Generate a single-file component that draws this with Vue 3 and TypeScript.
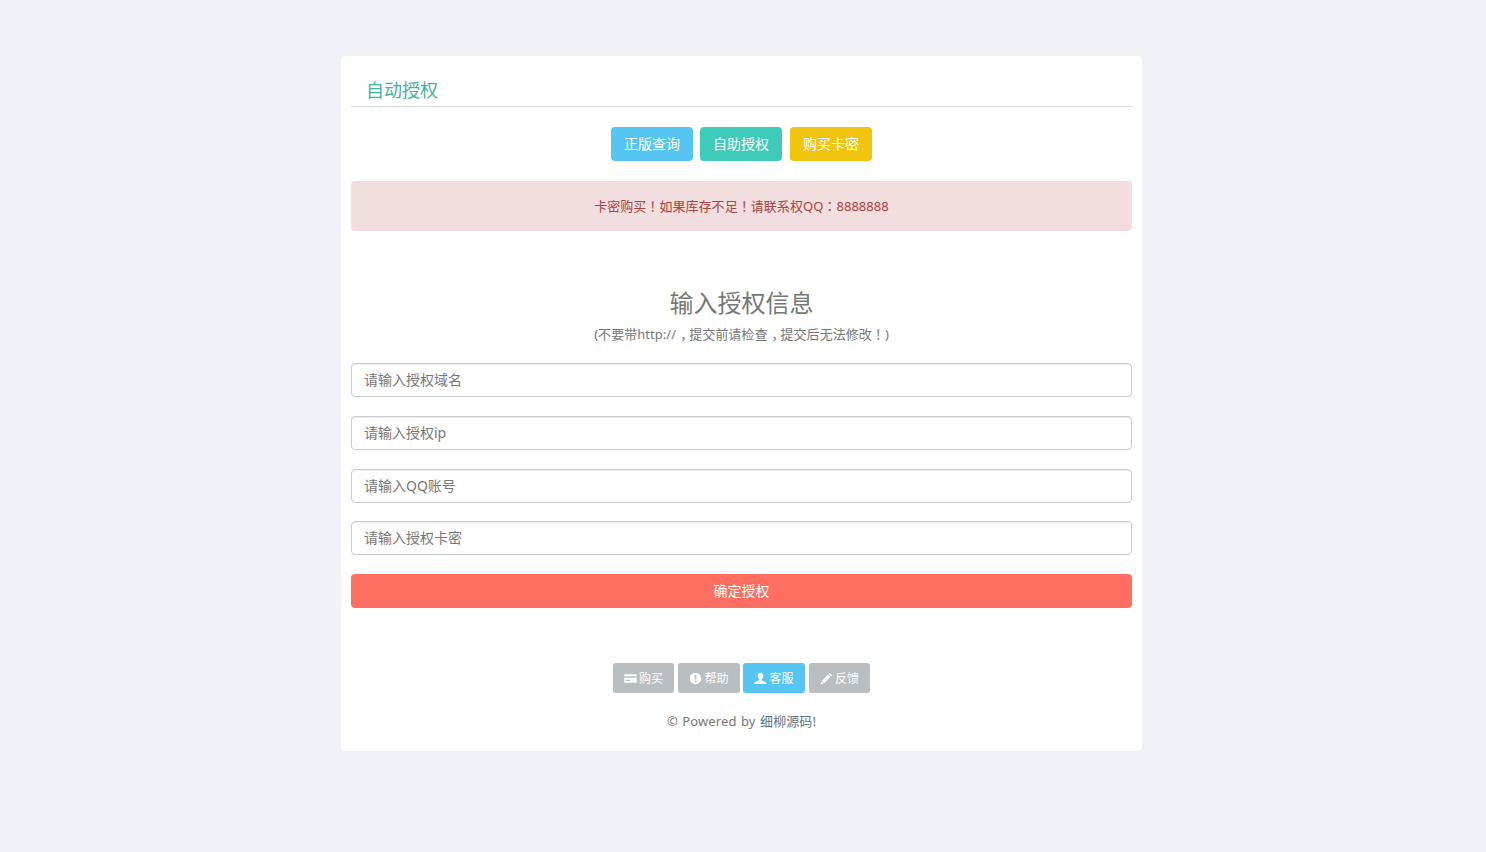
<script setup lang="ts">
const tops = [
  { label: '正版查询', cls: 'info' },
  { label: '自助授权', cls: 'teal' },
  { label: '购买卡密', cls: 'amber' },
]
const fields = ['请输入授权域名', '请输入授权ip', '请输入QQ账号', '请输入授权卡密']
const links = [
  { label: '购买', icon: 'card', active: false },
  { label: '帮助', icon: 'help', active: false },
  { label: '客服', icon: 'user', active: true },
  { label: '反馈', icon: 'pencil', active: false },
]
</script>

<template>
  <div class="page">
    <main class="card">
      <header class="head"><h3>自动授权</h3></header>
      <div class="top-actions">
        <a v-for="t in tops" :key="t.label" class="btn" :class="t.cls">{{ t.label }}</a>
      </div>
      <div class="alert">卡密购买！如果库存不足！请联系权QQ：8888888</div>
      <h2 class="title">输入授权信息</h2>
      <p class="sub">(不要带http://<span class="comma">，</span>提交前请检查<span class="comma">，</span>提交后无法修改！)</p>
      <form class="form" @submit.prevent>
        <input v-for="f in fields" :key="f" class="field" type="text" :placeholder="f" />
        <button class="submit" type="submit">确定授权</button>
      </form>
      <nav class="links">
        <a v-for="l in links" :key="l.label" class="link" :class="{ active: l.active }">
          <svg class="ico" viewBox="0 0 14 14" aria-hidden="true">
            <path v-if="l.icon === 'card'" fill="currentColor" fill-rule="evenodd" d="M1.2 2.5h11.6a1 1 0 0 1 1 1v7a1 1 0 0 1-1 1H1.2a1 1 0 0 1-1-1v-7a1 1 0 0 1 1-1ZM.2 4.6v1.6h13.6V4.6ZM1.6 8.4v1.2h5V8.4Z" />
            <path v-else-if="l.icon === 'help'" fill="currentColor" fill-rule="evenodd" d="M7 .8a6.2 6.2 0 1 1 0 12.4A6.2 6.2 0 0 1 7 .8ZM5.9 3.2l.3 5h1.6l.3-5ZM7 9.1a1.1 1.1 0 1 0 0 2.2 1.1 1.1 0 0 0 0-2.2Z" />
            <path v-else-if="l.icon === 'user'" fill="currentColor" d="M7 .7c2 0 3.1 1.5 3.1 3.4 0 1.6-.7 3-1.6 3.7v1.1c0 .5 3.200 1.100 4.500 2.100.4.300.6 1.100.6 2H.4c0-.9.2-1.700.6-2 1.300-1 4.500-1.600 4.500-2.100V7.800C4.600 7.100 3.900 5.700 3.900 4.100 3.900 2.200 5 .7 7 .7Z" />
            <path v-else fill="currentColor" d="M10.600 1 13 3.400 11.700 4.700 9.300 2.300ZM8.600 3 11 5.400 4.300 12.100 1.900 9.700ZM1.400 10.500 3.500 12.600.6 13.400Z" />
          </svg>
          <span class="link-text">{{ l.label }}</span>
        </a>
      </nav>
      <footer class="foot">© Powered by <a class="foot-link">细柳源码!</a></footer>
    </main>
  </div>
</template>

<style>
html,
body {
  margin: 0;
  background: #f0f2f7;
}
</style>

<style scoped>
.page {
  min-height: 852px;
  box-sizing: border-box;
  padding-top: 56px;
  font-family: "Noto Sans", "Noto Sans CJK SC", sans-serif;
}
.card {
  width: 801px;
  height: 695px;
  box-sizing: border-box;
  margin-left: 341px;
  padding: 0 10px;
  background: #fff;
  border-radius: 4px;
}
.head {
  height: 51px;
  box-sizing: border-box;
  border-bottom: 1px solid #dcdde0;
  padding: 21px 0 0 15px;
}
.head h3 {
  margin: 0;
  font-size: 18px;
  line-height: 26px;
  font-weight: 400;
  color: #45b29d;
}
.top-actions {
  display: flex;
  justify-content: center;
  gap: 7px;
  margin-top: 20px;
}
.btn {
  width: 82px;
  height: 34px;
  border-radius: 4px;
  color: #fff;
  font-size: 14px;
  line-height: 34px;
  text-align: center;
}
.btn:last-child {
  margin-left: 1px;
}
.info {
  background: #56c5f1;
}
.teal {
  background: #3fcbb9;
}
.amber {
  background: #f1c40f;
}
.alert {
  height: 50px;
  margin-top: 20px;
  border-radius: 4px;
  background: #f2dede;
  color: #a94442;
  font-family: "Noto Sans", "Noto Sans CJK KR", sans-serif;
  font-size: 13px;
  line-height: 50px;
  letter-spacing: 0.05px;
  text-align: center;
}
.title {
  margin: 55px 0 0;
  color: #777;
  font-size: 24px;
  line-height: 33px;
  font-weight: 400;
  text-align: center;
}
.sub {
  margin: 4px 0 0;
  color: #777;
  font-family: "Noto Sans", "Noto Sans CJK KR", sans-serif;
  font-size: 13px;
  line-height: 22px;
  letter-spacing: 0.05px;
  text-align: center;
}
.comma {
  padding-left: 4px;
  letter-spacing: -4px;
}
.form {
  display: flex;
  flex-direction: column;
  gap: 18.75px;
  margin-top: 18px;
}
.field {
  width: 100%;
  height: 34px;
  box-sizing: border-box;
  padding: 6px 12px 7px;
  border: 1px solid #ccc;
  border-radius: 4px;
  outline: none;
  box-shadow: inset 0 1px 1px rgba(0, 0, 0, 0.075);
  font: 14px "Noto Sans", "Noto Sans CJK SC", sans-serif;
}
.field::placeholder {
  color: #777;
  opacity: 1;
}
.submit {
  height: 34px;
  padding: 0 0 2px;
  border: 0;
  border-radius: 4px;
  background: #ff6f61;
  color: #fff;
  font: 14px "Noto Sans", "Noto Sans CJK SC", sans-serif;
}
.links {
  display: flex;
  justify-content: center;
  gap: 4px;
  margin-top: 55px;
}
.link {
  display: flex;
  align-items: center;
  justify-content: center;
  gap: 2px;
  width: 61px;
  height: 30px;
  border-radius: 3px;
  background: #b9bec3;
  color: #fff;
  font-size: 12px;
  line-height: 18px;
}
.link:nth-child(2),
.link:nth-child(3) {
  width: 62px;
}
.link:nth-child(3) {
  margin-left: -1px;
}
.link.active {
  background: #56c5f1;
}
.link-text {
  padding-top: 2px;
}
.ico {
  width: 13px;
  height: 13px;
  flex: none;
}
.foot {
  margin-top: 18px;
  color: #777;
  font-size: 13px;
  line-height: 20px;
  letter-spacing: 0.1px;
  word-spacing: 1px;
  text-align: center;
}
.foot-link {
  color: #5b7586;
}
</style>
